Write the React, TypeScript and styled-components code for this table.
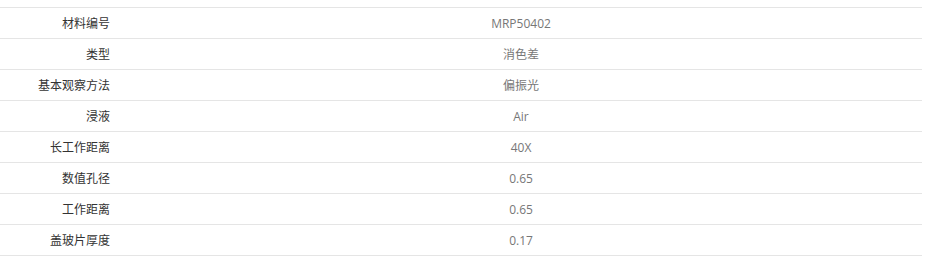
import React from 'react';
import styled, { createGlobalStyle } from 'styled-components';

const GlobalStyle = createGlobalStyle`
  body {
    margin: 0;
    background: #fff;
    font-family: 'Open Sans', 'Noto Sans CJK SC', sans-serif;
  }
`;

const Wrap = styled.div`
  padding-top: 7px;
  width: 922px;
`;

const Table = styled.div`
  border-top: 1px solid #e5e5e5;
`;

const Row = styled.div`
  display: grid;
  grid-template-columns: 120px 1fr;
  height: 30px;
  border-bottom: 1px solid #e5e5e5;
  align-items: center;
  font-size: 12px;
`;

const Label = styled.div`
  text-align: right;
  padding-right: 10px;
  color: #333;
`;

const Value = styled.div`
  text-align: center;
  color: #777;
`;

const specs: [string, string][] = [
  ['材料编号', 'MRP50402'],
  ['类型', '消色差'],
  ['基本观察方法', '偏振光'],
  ['浸液', 'Air'],
  ['长工作距离', '40X'],
  ['数值孔径', '0.65'],
  ['工作距离', '0.65'],
  ['盖玻片厚度', '0.17'],
];

export default function App() {
  return (
    <>
      <GlobalStyle />
      <Wrap>
        <Table>
          {specs.map(([k, v]) => (
            <Row key={k}>
              <Label>{k}</Label>
              <Value>{v}</Value>
            </Row>
          ))}
        </Table>
      </Wrap>
    </>
  );
}
